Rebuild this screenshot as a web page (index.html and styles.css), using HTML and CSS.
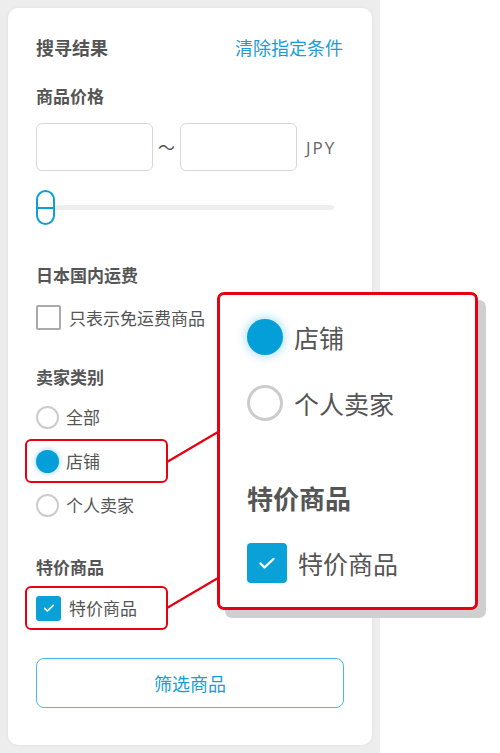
FILE: index.html
```html
<!DOCTYPE html>
<html lang="zh-CN">
<head>
<meta charset="utf-8">
<title>搜寻结果</title>
<link rel="stylesheet" href="styles.css">
</head>
<body>
<div class="stage">
  <div class="panel">
    <div class="card">
      <div class="head-row">
        <span class="title">搜寻结果</span>
        <span class="link">清除指定条件</span>
      </div>

      <div class="sec-title price-title">商品价格</div>
      <div class="price-row">
        <div class="input"></div>
        <span class="tilde">〜</span>
        <div class="input"></div>
        <span class="cur">JPY</span>
      </div>
      <div class="slider">
        <div class="handle"></div>
        <div class="track"></div>
      </div>

      <div class="sec-title ship-title">日本国内运费</div>
      <div class="check-row">
        <span class="box"></span>
        <span class="lbl">只表示免运费商品</span>
      </div>

      <div class="sec-title seller-title">卖家类别</div>
      <div class="radios">
        <div class="radio-row"><span class="radio"></span><span class="lbl">全部</span></div>
        <div class="radio-row hl"><span class="radio on"></span><span class="lbl">店铺</span></div>
        <div class="radio-row"><span class="radio"></span><span class="lbl">个人卖家</span></div>
      </div>

      <div class="sec-title sale-title">特价商品</div>
      <div class="check-row hl sale-row">
        <span class="box on">
          <svg viewBox="0 0 24 24" width="16" height="16"><path d="M5.5 12.5l4 4L18.5 8" fill="none" stroke="#fff" stroke-width="2.4" stroke-linecap="round" stroke-linejoin="round"/></svg>
        </span>
        <span class="lbl">特价商品</span>
      </div>

      <div class="btn">筛选商品</div>
    </div>
  </div>

  <svg class="lines" width="500" height="753" viewBox="0 0 500 753">
    <line x1="167" y1="462" x2="218" y2="432" stroke="#e60012" stroke-width="2.2"/>
    <line x1="167" y1="608" x2="218" y2="578" stroke="#e60012" stroke-width="2.2"/>
  </svg>

  <div class="callout">
    <div class="c-row"><span class="c-radio on"></span><span class="c-lbl">店铺</span></div>
    <div class="c-row"><span class="c-radio"></span><span class="c-lbl">个人卖家</span></div>
    <div class="c-title">特价商品</div>
    <div class="c-check-row">
      <span class="c-box">
        <svg viewBox="0 0 24 24" width="24" height="24"><path d="M5.5 12.5l4 4L18.5 8" fill="none" stroke="#fff" stroke-width="2.4" stroke-linecap="round" stroke-linejoin="round"/></svg>
      </span>
      <span class="c-lbl">特价商品</span>
    </div>
  </div>
</div>
</body>
</html>
```

FILE: styles.css
```css
* { box-sizing: border-box; }
html, body { margin: 0; padding: 0; background: #fff; }
body {
  font-family: "Noto Sans CJK SC", "Noto Sans", sans-serif;
  color: #555;
}
.stage {
  position: relative;
  width: 500px;
  height: 753px;
  overflow: hidden;
}
.panel {
  width: 380px;
  height: 753px;
  background: #ededed;
  padding: 8px;
}
.card {
  width: 364px;
  height: 737px;
  background: #fff;
  border-radius: 10px;
  box-shadow: 0 0 4px rgba(0,0,0,0.06);
  padding: 27px 28px 0 28px;
  display: flex;
  flex-direction: column;
}
.head-row {
  display: flex;
  justify-content: space-between;
  align-items: center;
  height: 24px;
}
.title {
  font-size: 18px;
  font-weight: 700;
  color: #555;
  line-height: 24px;
}
.link {
  font-size: 18px;
  color: #1a9cd8;
  line-height: 24px;
  margin-right: 1px;
}
.sec-title {
  font-size: 17px;
  font-weight: 700;
  color: #555;
  line-height: 24px;
  height: 24px;
}
.price-title { margin-top: 25px; }
.price-row {
  display: flex;
  align-items: center;
  margin-top: 15px;
  height: 48px;
}
.input {
  width: 117px;
  height: 48px;
  border: 1px solid #d6d6d6;
  border-radius: 6px;
}
.tilde {
  width: 27px;
  text-align: center;
  font-size: 17px;
  color: #555;
  line-height: 20px;
}
.cur {
  margin-left: 9px;
  font-family: "Open Sans", "Noto Sans", sans-serif;
  font-size: 17px;
  letter-spacing: 2px;
  color: #666;
}
.slider {
  display: flex;
  align-items: center;
  margin-top: 19px;
  height: 35px;
  width: 298px;
}
.handle {
  position: relative;
  width: 19px;
  height: 35px;
  border: 2px solid #0e9fd8;
  border-radius: 10px;
  background: #fff;
  flex: none;
}
.handle::after {
  content: "";
  position: absolute;
  left: 0;
  right: 0;
  top: 14.5px;
  height: 2px;
  background: #0e9fd8;
}
.track {
  flex: 1;
  height: 5px;
  background: #eeeeee;
  border-radius: 3px;
}
.ship-title { margin-top: 38px; }
.check-row {
  display: flex;
  align-items: center;
  margin-top: 18px;
  height: 25px;
}
.box {
  width: 25px;
  height: 25px;
  border: 2px solid #aaaaaa;
  border-radius: 2px;
  flex: none;
  display: flex;
  align-items: center;
  justify-content: center;
}
.box.on {
  border: none;
  background: #0aa0d8;
  border-radius: 3px;
}
.lbl {
  font-size: 17px;
  color: #555;
  line-height: 24px;
}
.check-row .lbl { margin-left: 8px; }
.seller-title { margin-top: 35px; }
.radios {
  margin-top: 6px;
  display: flex;
  flex-direction: column;
}
.radio-row {
  display: flex;
  align-items: center;
  height: 44px;
}
.radio {
  width: 23px;
  height: 23px;
  border: 2px solid #cccccc;
  border-radius: 50%;
  flex: none;
}
.radio.on {
  border: none;
  background: #049fd9;
  box-shadow: 0 0 5px 1px rgba(4,159,217,0.35);
}
.radio-row .lbl { margin-left: 7px; }
.hl {
  width: 143px;
  height: 44px;
  margin-left: -11px;
  padding-left: 9px;
  border: 2px solid #e60012;
  border-radius: 6px;
}
.sale-title { margin-top: 28px; }
.sale-row { margin-top: 7px; }
.btn {
  margin-top: 28px;
  height: 50px;
  width: 308px;
  border: 1px solid #4ab9e8;
  border-radius: 8px;
  display: flex;
  align-items: center;
  justify-content: center;
  font-size: 18px;
  color: #1a9cd8;
}
.lines {
  position: absolute;
  left: 0;
  top: 0;
  pointer-events: none;
}
.callout {
  position: absolute;
  left: 217px;
  top: 292px;
  width: 261px;
  height: 318px;
  background: #fff;
  border: 3px solid #e60012;
  border-radius: 7px;
  box-shadow: 8px 8px 0 #cfcfcf;
  padding: 9px 0 0 27px;
  display: flex;
  flex-direction: column;
}
.c-row {
  display: flex;
  align-items: center;
  height: 66px;
}
.c-radio {
  width: 36px;
  height: 36px;
  border: 3px solid #cccccc;
  border-radius: 50%;
  flex: none;
}
.c-radio.on {
  border: none;
  background: #049fd9;
  box-shadow: 0 0 9px 2px rgba(4,159,217,0.3);
}
.c-lbl {
  font-size: 25px;
  color: #555;
  line-height: 34px;
  margin-left: 11px;
}
.c-title {
  margin-top: 44px;
  font-size: 26px;
  font-weight: 700;
  color: #555;
  line-height: 36px;
  height: 36px;
}
.c-check-row {
  display: flex;
  align-items: center;
  margin-top: 27px;
  height: 40px;
}
.c-box {
  width: 40px;
  height: 40px;
  background: #0aa0d8;
  border-radius: 4px;
  display: flex;
  align-items: center;
  justify-content: center;
  flex: none;
}
```
